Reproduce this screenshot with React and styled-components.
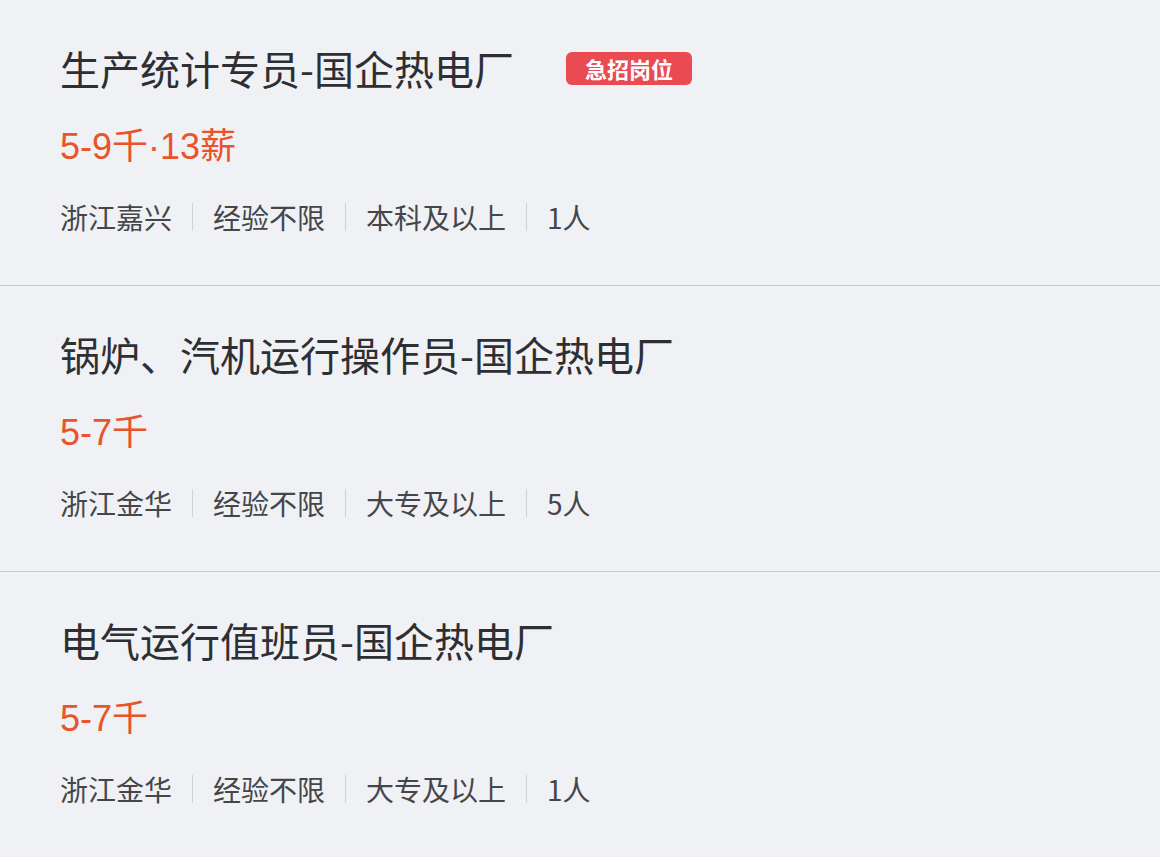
import React from "react";
import styled, { createGlobalStyle } from "styled-components";

const GlobalStyle = createGlobalStyle`
  html, body {
    margin: 0;
    padding: 0;
    background: #ffffff;
  }
  body {
    font-family: "Noto Sans CJK SC", "Noto Sans", sans-serif;
  }
`;

const List = styled.div`
  width: 1160px;
  height: 857px;
  background: #f0f1f4;
  display: flex;
  flex-direction: column;
`;

const Card = styled.div`
  height: ${(props) => (props.last ? "285px" : "286px")};
  box-sizing: border-box;
  padding: 44px 0 0 60px;
  border-bottom: ${(props) => (props.last ? "none" : "1px solid #c4cbd6")};
  display: flex;
  flex-direction: column;
`;

const TitleRow = styled.div`
  display: flex;
  align-items: center;
  height: 48px;
`;

const Title = styled.h2`
  margin: 0;
  font-size: 40px;
  line-height: 48px;
  font-weight: 400;
  color: #2e2f33;
  white-space: nowrap;
`;

const Badge = styled.span`
  margin-left: 52px;
  height: 33px;
  padding: 0 19px;
  display: inline-flex;
  align-items: center;
  border-radius: 6px;
  background: #ea4a51;
  color: #ffffff;
  font-size: 22px;
  font-weight: 700;
  line-height: 1;
`;

const Salary = styled.div`
  margin-top: 35px;
  height: 40px;
  font-family: "Liberation Sans", "Noto Sans CJK SC", sans-serif;
  font-size: 36px;
  line-height: 40px;
  color: #e9542a;
  white-space: nowrap;
`;

const Meta = styled.div`
  margin-top: 32px;
  height: 36px;
  display: flex;
  align-items: center;
`;

const MetaItem = styled.span`
  font-size: 28px;
  line-height: 36px;
  color: #45464a;
  white-space: nowrap;
  padding: 0 20px;
  &:first-child {
    padding-left: 0;
  }
  & + & {
    border-left: 1px solid #cfd2d8;
    line-height: 28px;
  }
`;

const jobs = [
  {
    title: "生产统计专员-国企热电厂",
    urgent: true,
    salary: "5-9千·13薪",
    meta: ["浙江嘉兴", "经验不限", "本科及以上", "1人"],
  },
  {
    title: "锅炉、汽机运行操作员-国企热电厂",
    salary: "5-7千",
    meta: ["浙江金华", "经验不限", "大专及以上", "5人"],
  },
  {
    title: "电气运行值班员-国企热电厂",
    salary: "5-7千",
    meta: ["浙江金华", "经验不限", "大专及以上", "1人"],
  },
];

const App = () => {
  return (
    <>
      <GlobalStyle />
      <List>
        {jobs.map((job, i) => (
          <Card key={job.title} last={i === jobs.length - 1}>
            <TitleRow>
              <Title>{job.title}</Title>
              {job.urgent && <Badge>急招岗位</Badge>}
            </TitleRow>
            <Salary>{job.salary}</Salary>
            <Meta>
              {job.meta.map((m) => (
                <MetaItem key={m}>{m}</MetaItem>
              ))}
            </Meta>
          </Card>
        ))}
      </List>
    </>
  );
};

export default App;
